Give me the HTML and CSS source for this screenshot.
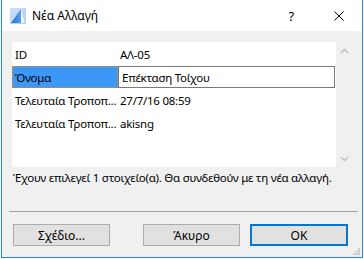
FILE: index.html
```html
<!DOCTYPE html>
<html>
<head>
<meta charset="utf-8">
<link rel="stylesheet" href="styles.css">
</head>
<body>
<div class="window">
  <div class="titlebar">
    <svg class="app-icon" width="16" height="16" viewBox="0 0 16 16">
      <defs>
        <linearGradient id="bg" x1="0" y1="0" x2="1" y2="1">
          <stop offset="0" stop-color="#cfe3fb"/>
          <stop offset="1" stop-color="#a9cbf3"/>
        </linearGradient>
        <linearGradient id="sail" x1="0" y1="0" x2="1" y2="0">
          <stop offset="0" stop-color="#1f6fd6"/>
          <stop offset="1" stop-color="#5aa2ee"/>
        </linearGradient>
      </defs>
      <rect x="0" y="0" width="16" height="16" fill="url(#bg)"/>
      <path d="M1 15 C4 11 8 5 11 1 L11 15 Z" fill="url(#sail)"/>
      <path d="M11 1 L15 15 L11 15 Z" fill="#eef5fe"/>
    </svg>
    <span class="title">Νέα Αλλαγή</span>
    <span class="help">?</span>
    <svg class="close" width="10" height="10" viewBox="0 0 10 10">
      <path d="M0.5 0.5 L9.5 9.5 M9.5 0.5 L0.5 9.5" stroke="#000" stroke-width="1" fill="none"/>
    </svg>
  </div>
  <div class="content">
    <div class="listarea">
      <div class="list">
        <div class="row">
          <div class="label">ID</div>
          <div class="value">ΑΛ-05</div>
        </div>
        <div class="row">
          <div class="label selected">Όνομα</div>
          <div class="value input">Επέκταση Τοίχου</div>
        </div>
        <div class="row">
          <div class="label">Τελευταία Τροποπ...</div>
          <div class="value">27/7/16 08:59</div>
        </div>
        <div class="row">
          <div class="label">Τελευταία Τροποπ...</div>
          <div class="value">akisng</div>
        </div>
      </div>
      <div class="scrollbar">
        <svg width="9" height="6" viewBox="0 0 9 6"><path d="M1 5 L4.5 1.5 L8 5" stroke="#c2c2c2" stroke-width="1.6" fill="none"/></svg>
        <svg width="9" height="6" viewBox="0 0 9 6"><path d="M1 1 L4.5 4.5 L8 1" stroke="#c2c2c2" stroke-width="1.6" fill="none"/></svg>
      </div>
    </div>
    <div class="message">Έχουν επιλεγεί 1 στοιχείο(α). Θα συνδεθούν με τη νέα αλλαγή.</div>
    <div class="separator"></div>
    <div class="buttons">
      <button class="btn">Σχέδιο...</button>
      <button class="btn">Άκυρο</button>
      <button class="btn default">OK</button>
    </div>
    <svg class="grip" width="7" height="7" viewBox="0 0 7 7">
      <rect x="5" y="0" width="2" height="2" fill="#c8c8c8"/>
      <rect x="2.5" y="2.5" width="2" height="2" fill="#c8c8c8"/>
      <rect x="5" y="2.5" width="2" height="2" fill="#c8c8c8"/>
      <rect x="0" y="5" width="2" height="2" fill="#c8c8c8"/>
      <rect x="2.5" y="5" width="2" height="2" fill="#c8c8c8"/>
      <rect x="5" y="5" width="2" height="2" fill="#c8c8c8"/>
    </svg>
  </div>
</div>
</body>
</html>
```
FILE: styles.css
```css
html, body {
  margin: 0;
  padding: 0;
  background: #ffffff;
}
body {
  width: 364px;
  height: 259px;
  padding: 0 1px 1px 1px;
  box-sizing: border-box;
  font-family: "Noto Sans", "Open Sans", sans-serif;
  font-size: 11.5px;
  letter-spacing: -0.25px;
  color: #000;
}
.window {
  height: 258px;
  border: 1px solid #2b88d8;
  border-top: none;
  box-sizing: border-box;
  display: flex;
  flex-direction: column;
  background: #f0f0f0;
}
.titlebar {
  height: 31px;
  flex: none;
  background: #fff;
  display: flex;
  align-items: center;
  padding-left: 8px;
}
.app-icon {
  flex: none;
}
.title {
  margin-left: 6px;
  font-size: 12px;
  letter-spacing: 0;
  flex: 1;
}
.help {
  font-size: 13px;
  margin-right: 40px;
}
.close {
  margin-right: 18px;
}
.content {
  flex: 1;
  position: relative;
  padding: 11px 0 0 10px;
  display: flex;
  flex-direction: column;
}
.listarea {
  display: flex;
  height: 125px;
}
.list {
  width: 324px;
  background: #fff;
  padding-top: 1px;
  box-sizing: border-box;
}
.row {
  display: flex;
  height: 23px;
  align-items: stretch;
}
.label {
  width: 106px;
  flex: none;
  padding-left: 3px;
  box-sizing: border-box;
  display: flex;
  align-items: center;
  white-space: nowrap;
}
.label.selected {
  background: #3c98f8;
  outline: 1px dotted #e08a1e;
  outline-offset: -1px;
  height: 22px;
}
.value {
  padding-left: 2px;
  display: flex;
  align-items: center;
  white-space: nowrap;
}
.value.input {
  width: 217px;
  height: 22px;
  border: 1px solid #7a7a7a;
  box-sizing: border-box;
  padding-left: 3px;
}
.scrollbar {
  width: 17px;
  display: flex;
  flex-direction: column;
  justify-content: space-between;
  align-items: center;
  padding: 6px 0 5px;
  box-sizing: border-box;
}
.message {
  margin-top: 3px;
  margin-left: 1px;
  white-space: nowrap;
}
.separator {
  margin: 26px 0 0 -3px;
  width: 349px;
  height: 1px;
  background: #a0a0a0;
}
.buttons {
  display: flex;
  margin-top: 12px;
  margin-left: 1px;
}
.btn {
  width: 97px;
  height: 22px;
  border: 1px solid #adadad;
  background: #e1e1e1;
  font-family: inherit;
  font-size: 12px;
  color: #000;
  padding: 0;
  margin: 0 33px 0 0;
}
.btn.default {
  border: 2px solid #0078d7;
  margin-right: 0;
  margin-left: -23px;
  width: 98px;
}
.grip {
  position: absolute;
  right: 2px;
  bottom: 2px;
}
```
